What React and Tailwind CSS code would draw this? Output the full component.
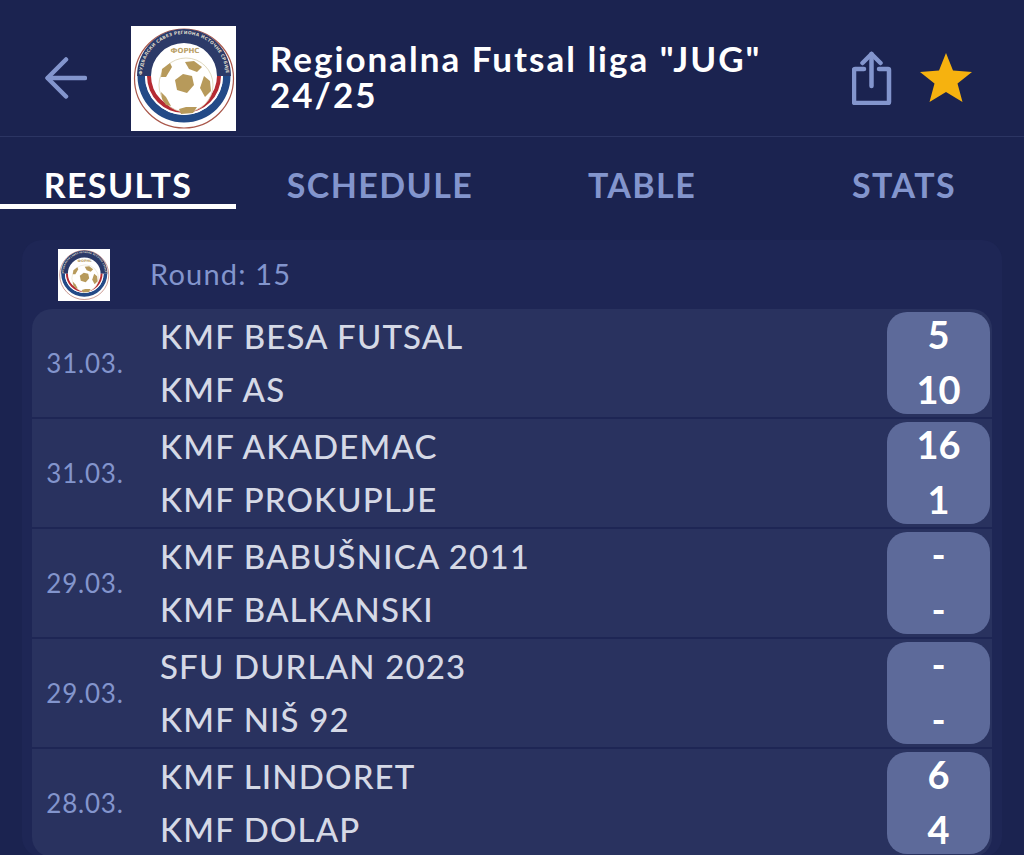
import React from 'react';

const matches = [
  { date: '31.03.', home: 'KMF BESA FUTSAL', away: 'KMF AS', homeScore: '5', awayScore: '10' },
  { date: '31.03.', home: 'KMF AKADEMAC', away: 'KMF PROKUPLJE', homeScore: '16', awayScore: '1' },
  { date: '29.03.', home: 'KMF BABUŠNICA 2011', away: 'KMF BALKANSKI', homeScore: '-', awayScore: '-' },
  { date: '29.03.', home: 'SFU DURLAN 2023', away: 'KMF NIŠ 92', homeScore: '-', awayScore: '-' },
  { date: '28.03.', home: 'KMF LINDORET', away: 'KMF DOLAP', homeScore: '6', awayScore: '4' },
];

const tabs = ['RESULTS', 'SCHEDULE', 'TABLE', 'STATS'];

const LeagueLogo = ({ idSuffix, className }) => (
  <div className={`bg-white shrink-0 ${className}`}>
    <svg viewBox="0 0 105 105" className="w-full h-full">
      <circle cx="53" cy="52.5" r="49.5" fill="#fff" stroke="#a9574a" strokeWidth="1.2" />
      <path d="M6 50 A47 47 0 0 1 100 50 L86 50 A33 33 0 0 0 20 50 Z" fill="#2c3a68" />
      <path d="M6.5 50 A46.5 46.5 0 0 0 99.5 50 L92 50 A39 39 0 0 1 14 50 Z" fill="#234a87" />
      <path d="M14 50 A39 39 0 0 0 92 50 L90 50 A37 37 0 0 1 16 50 Z" fill="#fff" />
      <path d="M16 50 A37 37 0 0 0 90 50 L86 50 A33 33 0 0 1 20 50 Z" fill="#b52b33" />
      <path id={`arc-${idSuffix}`} d="M11 50 A42 42 0 0 1 95 50" fill="none" />
      <text fontFamily="'DejaVu Sans', sans-serif" fontSize="4.4" fontWeight="700" fill="#dcd8c8">
        <textPath href={`#arc-${idSuffix}`} startOffset="1" textLength="128">
          ФУДБАЛСКИ САВЕЗ РЕГИОНА ИСТОЧНЕ СРБИЈЕ
        </textPath>
      </text>
      <text x="54" y="27" textAnchor="middle" fontFamily="'DejaVu Sans', sans-serif" fontSize="7" fontWeight="700" fill="#b9a067">
        ФОРНС
      </text>
      <circle cx="55" cy="59" r="27" fill="#fff" stroke="#d8cfae" strokeWidth="0.8" />
      <g fill="#b79a5b">
        <polygon points="52,48 61,50 63,59 56,67 46,64 44,54" />
        <polygon points="54,36 63,35 71,41 66,46 58,43" />
        <polygon points="31,43 39,37 41,41 35,51 30,51" />
        <polygon points="73,50 79,55 80,65 74,71 69,62" />
        <polygon points="48,83 55,81 66,81 62,87 50,88" />
        <polygon points="30,66 35,71 40,80 35,79 31,73" />
      </g>
    </svg>
  </div>
);

const BackIcon = () => (
  <svg viewBox="0 0 42 42" className="w-[42px] h-[42px] shrink-0" fill="none" stroke="#8395cd" strokeWidth="4.5" strokeLinecap="round" strokeLinejoin="round">
    <path d="M40 21 H3" />
    <path d="M21 2.5 L2.5 21 L21 39.5" />
  </svg>
);

const ShareIcon = () => (
  <svg viewBox="0 0 40 54" className="w-10 h-[54px]" fill="none" stroke="#8395cd" strokeWidth="4.5" strokeLinecap="round" strokeLinejoin="round">
    <path d="M12 18 H3 a1 1 0 0 0 -1 1 V51 a1 1 0 0 0 1 1 H36 a1 1 0 0 0 1 -1 V19 a1 1 0 0 0 -1 -1 H27" />
    <path d="M19.5 35 V3" />
    <path d="M10.5 12 L19.5 3 L28.5 12" />
  </svg>
);

const StarIcon = () => (
  <svg viewBox="0 0 52 50" className="w-[52px] h-[50px]">
    <polygon points="26,0 33,17.5 52,19 37.5,30.5 42.5,49 26,39 9.5,49 14.5,30.5 0,19 19,17.5" fill="#f6b20f" />
  </svg>
);

const MatchRow = ({ match, first, last }) => (
  <div className={`flex items-stretch h-[108px] bg-[#29325f] pr-[2px] ${first ? 'rounded-t-[20px]' : ''} ${last ? 'rounded-b-[20px]' : ''}`}>
    <div className="w-[106px] shrink-0 flex items-center justify-center text-[26px] tracking-[0.8px] text-[#8395cd]">{match.date}</div>
    <div className="flex-1 pl-[22px] pb-[2px] flex flex-col justify-center gap-[15px] text-[33px] tracking-[1.15px] leading-[38px] font-medium text-[#d5d9e6]">
      <span>{match.home}</span>
      <span>{match.away}</span>
    </div>
    <div className="w-[103px] my-[3px] pb-[3px] rounded-[20px] bg-[#5d6a9a] flex flex-col justify-center items-center gap-[13px] text-[38px] leading-[42px] font-bold text-white">
      <span>{match.homeScore}</span>
      <span>{match.awayScore}</span>
    </div>
  </div>
);

export default function App() {
  return (
    <div className="w-[1024px] h-[855px] overflow-hidden bg-[#1b2350] font-['Lato',sans-serif]">
      <header className="h-[137px] flex items-center border-b border-[#2c3563] pt-[20px] pl-[45px] pr-[52px]">
        <BackIcon />
        <LeagueLogo idSuffix="big" className="w-[105px] h-[105px] ml-[44px]" />
        <h1 className="ml-[34px] w-[520px] pb-[5px] text-[35px] tracking-[2px] leading-[36px] font-bold text-white">
          Regionalna Futsal liga "JUG" 24/25
        </h1>
        <div className="ml-auto -mt-[1px] flex items-center gap-[28px]">
          <ShareIcon />
          <StarIcon />
        </div>
      </header>

      <nav className="h-[72px] grid grid-cols-[236px_236px_236px_236px] gap-[26px]">
        {tabs.map((tab, i) => (
          <div
            key={tab}
            className={`flex items-center justify-center pt-[28px] text-[34px] tracking-[1.4px] leading-none font-bold border-b-[5px] ${i === 0 ? 'text-white border-white' : 'text-[#8395cd] border-transparent'}`}
          >
            {tab}
          </div>
        ))}
      </nav>

      <main className="mx-[22px] mt-[31px] rounded-[20px] bg-[#1e2655] px-[10px]">
        <div className="h-[69px] flex items-center">
          <LeagueLogo idSuffix="small" className="w-[52px] h-[52px] ml-[26px]" />
          <span className="ml-[40px] pb-[2px] text-[29px] tracking-[1.2px] text-[#8395cd]">Round: 15</span>
        </div>
        <div className="flex flex-col gap-[2px]">
          {matches.map((match, i) => (
            <MatchRow key={match.home} match={match} first={i === 0} last={i === matches.length - 1} />
          ))}
        </div>
      </main>
    </div>
  );
}
